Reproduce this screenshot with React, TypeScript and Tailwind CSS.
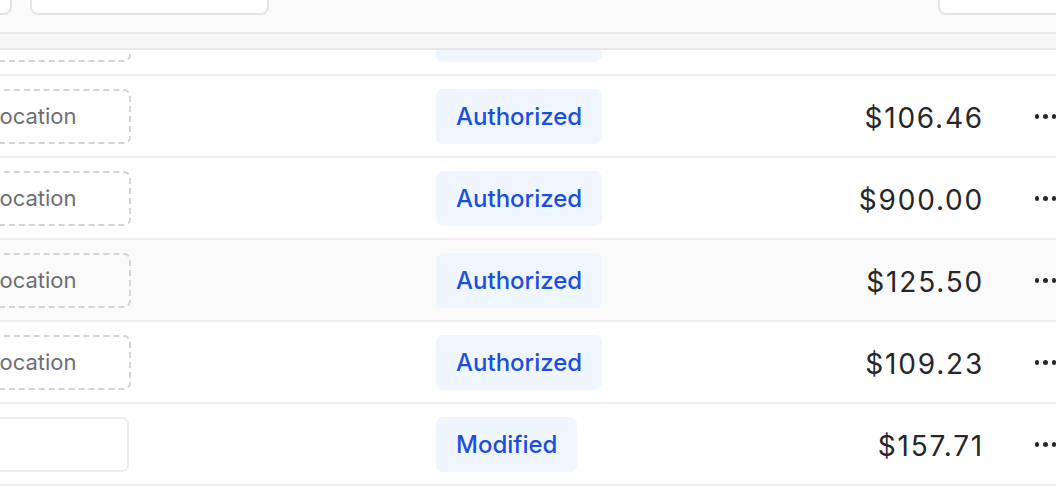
import React from "react";

type Row = {
  location: boolean;
  status: string;
  amount: string;
  hover?: boolean;
};

const rows: Row[] = [
  { location: true, status: "Authorized", amount: "$0.00" },
  { location: true, status: "Authorized", amount: "$106.46" },
  { location: true, status: "Authorized", amount: "$900.00" },
  { location: true, status: "Authorized", amount: "$125.50", hover: true },
  { location: true, status: "Authorized", amount: "$109.23" },
  { location: false, status: "Modified", amount: "$157.71" },
];

function Dots() {
  return (
    <div className="flex items-center gap-[4px]">
      <span className="w-[5px] h-[5px] rounded-full bg-[#27272a]" />
      <span className="w-[5px] h-[5px] rounded-full bg-[#27272a]" />
      <span className="w-[5px] h-[5px] rounded-full bg-[#27272a]" />
    </div>
  );
}

function TableRow({ row }: { row: Row }) {
  return (
    <div
      className={`flex items-center h-[82px] shrink-0 border-b-2 border-[#efeff0] ${
        row.hover ? "bg-[#fafafa]" : "bg-white"
      }`}
    >
      {/* Location */}
      <div className="-ml-[33px] w-[164px] shrink-0">
        {row.location ? (
          <div className="h-[55px] flex items-center pl-[18px] pt-[1px] rounded-[7px] border-2 border-dashed border-[#d4d4d8] text-[22px] text-[#6e6e76]">
            Location
          </div>
        ) : (
          <div className="h-[55px] w-[162px] rounded-[7px] border-2 border-[#ededee] bg-white" />
        )}
      </div>

      {/* Status */}
      <div className="ml-[305px] shrink-0">
        <span className="inline-flex items-center h-[55px] px-[20px] pt-[2px] rounded-[7px] bg-[#eff6ff] text-[24px] text-[#1c4ee0] font-medium">
          {row.status}
        </span>
      </div>

      {/* Amount */}
      <div className="flex-1 text-right text-[28px] tracking-[1.8px] text-[#27272a] -mr-[1px] pt-[3px]">
        {row.amount}
      </div>

      {/* Actions */}
      <div className="w-[73px] pl-[52px] shrink-0">
        <Dots />
      </div>
    </div>
  );
}

export default function App() {
  return (
    <div
      className="w-[1056px] h-[494px] overflow-hidden bg-white flex flex-col"
      style={{ fontFamily: "Inter, 'Noto Sans', sans-serif" }}
    >
      {/* Toolbar */}
      <div className="h-[34px] shrink-0 bg-[#fafafa] border-b-2 border-[#ebebed] flex items-start overflow-hidden">
        <div className="-mt-[26px] w-[40px] -ml-[28px] h-[41px] rounded-b-[8px] border-2 border-[#e4e4e7] bg-white shrink-0" />
        <div className="-mt-[26px] ml-[18px] w-[239px] h-[41px] rounded-[8px] border-2 border-[#e4e4e7] bg-white shrink-0" />
        <div className="flex-1" />
        <div className="-mt-[26px] w-[140px] -mr-[22px] h-[41px] rounded-[8px] border-2 border-[#e4e4e7] bg-white shrink-0" />
      </div>

      {/* Column header band */}
      <div className="h-[16px] shrink-0 bg-[#f6f6f7] border-b-2 border-[#e8e8ea]" />

      {/* Body, scrolled */}
      <div className="flex-1 overflow-hidden">
        <div className="-mt-[56px] flex flex-col">
          {rows.map((r, i) => (
            <TableRow key={i} row={r} />
          ))}
        </div>
      </div>
    </div>
  );
}
